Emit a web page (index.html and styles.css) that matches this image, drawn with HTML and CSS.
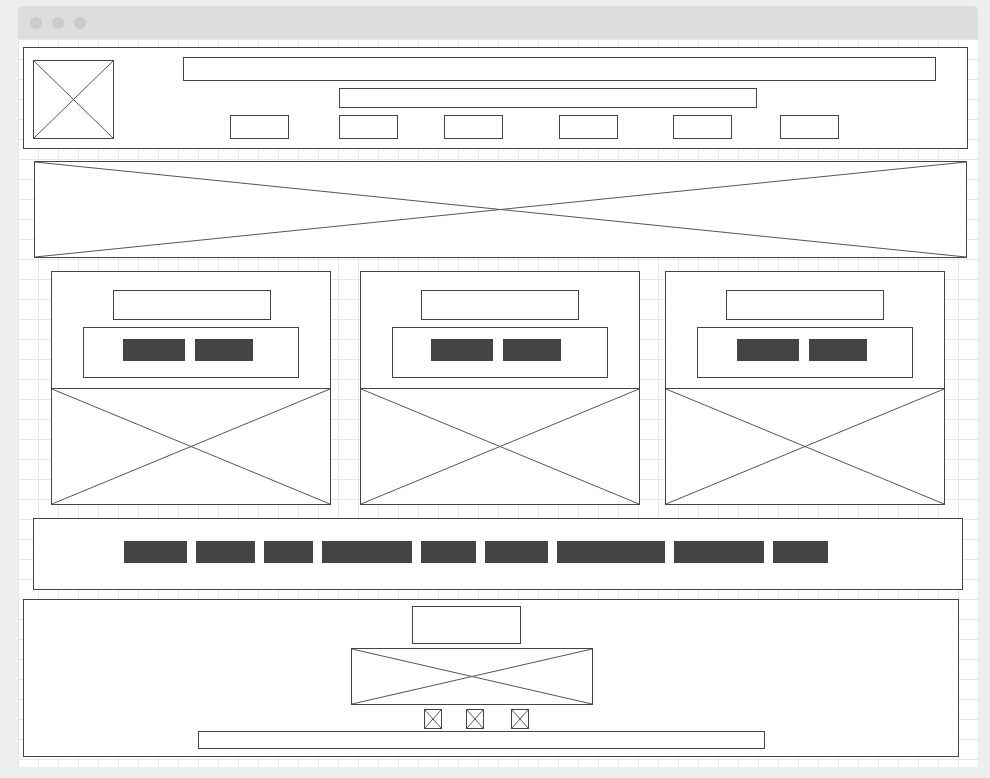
FILE: index.html
```html
<!DOCTYPE html>
<html>
<head>
<meta charset="utf-8">
<title>Wireframe</title>
<link rel="stylesheet" href="styles.css">
</head>
<body>
<div class="window">
  <div class="titlebar"><span class="dot"></span><span class="dot"></span><span class="dot"></span></div>
  <div class="content">
    <div class="header">
      <div class="logo box"><svg class="x" viewBox="0 0 100 100" preserveAspectRatio="none"><line x1="0" y1="0" x2="100" y2="100"/><line x1="100" y1="0" x2="0" y2="100"/></svg></div>
      <div class="hcol">
        <div class="box topbar"></div>
        <div class="box subbar"></div>
        <div class="hnav">
          <div class="box hbtn"></div><div class="box hbtn"></div><div class="box hbtn"></div><div class="box hbtn"></div><div class="box hbtn"></div><div class="box hbtn"></div>
        </div>
      </div>
    </div>
    <div class="box banner"><svg class="x" viewBox="0 0 100 100" preserveAspectRatio="none"><line x1="0" y1="0" x2="100" y2="100"/><line x1="100" y1="0" x2="0" y2="100"/></svg></div>
    <div class="cards">
      <div class="box card">
        <div class="box ctitle"></div>
        <div class="box cinner"><span class="fill w62"></span><span class="fill w58"></span></div>
        <div class="cimg"><svg class="x" viewBox="0 0 100 100" preserveAspectRatio="none"><line x1="0" y1="0" x2="100" y2="100"/><line x1="100" y1="0" x2="0" y2="100"/></svg></div>
      </div>
      <div class="box card">
        <div class="box ctitle"></div>
        <div class="box cinner"><span class="fill w62"></span><span class="fill w58"></span></div>
        <div class="cimg"><svg class="x" viewBox="0 0 100 100" preserveAspectRatio="none"><line x1="0" y1="0" x2="100" y2="100"/><line x1="100" y1="0" x2="0" y2="100"/></svg></div>
      </div>
      <div class="box card">
        <div class="box ctitle"></div>
        <div class="box cinner"><span class="fill w62"></span><span class="fill w58"></span></div>
        <div class="cimg"><svg class="x" viewBox="0 0 100 100" preserveAspectRatio="none"><line x1="0" y1="0" x2="100" y2="100"/><line x1="100" y1="0" x2="0" y2="100"/></svg></div>
      </div>
    </div>
    <div class="box navbar">
      <span class="fill n1"></span><span class="fill n2"></span><span class="fill n3"></span><span class="fill n4"></span><span class="fill n5"></span><span class="fill n6"></span><span class="fill n7"></span><span class="fill n8"></span><span class="fill n9"></span>
    </div>
    <div class="box footer">
      <div class="box ftitle"></div>
      <div class="box fimg"><svg class="x" viewBox="0 0 100 100" preserveAspectRatio="none"><line x1="0" y1="0" x2="100" y2="100"/><line x1="100" y1="0" x2="0" y2="100"/></svg></div>
      <div class="ficons">
        <div class="box ficon"><svg class="x" viewBox="0 0 100 100" preserveAspectRatio="none"><line x1="0" y1="0" x2="100" y2="100"/><line x1="100" y1="0" x2="0" y2="100"/></svg></div>
        <div class="box ficon"><svg class="x" viewBox="0 0 100 100" preserveAspectRatio="none"><line x1="0" y1="0" x2="100" y2="100"/><line x1="100" y1="0" x2="0" y2="100"/></svg></div>
        <div class="box ficon"><svg class="x" viewBox="0 0 100 100" preserveAspectRatio="none"><line x1="0" y1="0" x2="100" y2="100"/><line x1="100" y1="0" x2="0" y2="100"/></svg></div>
      </div>
      <div class="box fbar"></div>
    </div>
  </div>
</div>
</body>
</html>
```
FILE: styles.css
```css
* { box-sizing: border-box; }
html, body { margin: 0; padding: 0; }
body {
  background: #eeeeee;
  width: 990px;
  height: 778px;
  overflow: hidden;
  font-family: "Liberation Sans", Arial, sans-serif;
}
.window {
  margin: 6px 0 0 18px;
  width: 960px;
  height: 761px;
  background: #fff;
  border-radius: 5px 5px 0 0;
  overflow: hidden;
  display: flex;
  flex-direction: column;
}
.titlebar {
  height: 33px;
  flex: none;
  background: #dddddd;
  display: flex;
  align-items: center;
  gap: 10px;
  padding-left: 12px;
}
.dot {
  width: 12px;
  height: 12px;
  border-radius: 50%;
  background: #cbcbcb;
}
.content {
  flex: 1;
  background-color: #fff;
  background-image:
    linear-gradient(to right, #e7e7e7 1px, transparent 1px),
    linear-gradient(to bottom, #e7e7e7 1px, transparent 1px);
  background-size: 20px 20px;
  display: flex;
  flex-direction: column;
  align-items: flex-start;
}
.box {
  border: 1px solid #444;
  background: #fff;
  flex: none;
}
.x {
  display: block;
  width: 100%;
  height: 100%;
}
.x line {
  stroke: #555;
  stroke-width: 1;
  vector-effect: non-scaling-stroke;
}
.fill {
  display: block;
  background: #444;
  height: 22px;
  flex: none;
}

/* header */
.header {
  margin: 8px 0 0 5px;
  width: 945px;
  height: 102px;
  border: 1px solid #444;
  background: #fff;
  display: flex;
  align-items: flex-start;
  padding: 9px 0 0 9px;
}
.logo {
  width: 81px;
  height: 79px;
  margin-top: 3px;
}
.hcol {
  margin-left: 69px;
  display: flex;
  flex-direction: column;
  align-items: flex-start;
}
.topbar { width: 753px; height: 24px; }
.subbar { width: 418px; height: 20px; margin: 7px 0 0 156px; }
.hnav { display: flex; margin: 7px 0 0 47px; }
.hbtn { width: 59px; height: 24px; }
.hbtn:nth-child(2) { margin-left: 50px; }
.hbtn:nth-child(3) { margin-left: 46px; }
.hbtn:nth-child(4) { margin-left: 56px; }
.hbtn:nth-child(5) { margin-left: 55px; }
.hbtn:nth-child(6) { margin-left: 48px; }

/* banner */
.banner {
  margin: 12px 0 0 16px;
  width: 933px;
  height: 97px;
}

/* cards */
.cards {
  display: flex;
  margin: 13px 0 0 33px;
}
.card {
  width: 280px;
  height: 234px;
  display: flex;
  flex-direction: column;
}
.card:nth-child(2) { margin-left: 29px; }
.card:nth-child(3) { margin-left: 25px; }
.ctitle {
  width: 158px;
  height: 30px;
  margin: 18px 0 0 60px;
}
.card:first-child .ctitle { margin-left: 61px; }
.cinner {
  width: 216px;
  height: 51px;
  margin: 7px 0 0 31px;
  display: flex;
  align-items: flex-start;
  gap: 10px;
  padding: 11px 0 0 39px;
}
.card:nth-child(2) .cinner { padding-left: 38px; }
.w62 { width: 62px; }
.w58 { width: 58px; }
.cimg {
  margin-top: 10px;
  height: 116px;
  flex: none;
  border-top: 1px solid #444;
}

/* navbar */
.navbar {
  margin: 13px 0 0 15px;
  width: 930px;
  height: 72px;
  display: flex;
  align-items: flex-start;
  gap: 9px;
  padding: 22px 0 0 90px;
}
.n1 { width: 63px; }
.n2 { width: 59px; }
.n3 { width: 49px; }
.n4 { width: 90px; }
.n5 { width: 55px; }
.n6 { width: 63px; }
.n7 { width: 108px; }
.n8 { width: 90px; }
.n9 { width: 55px; }

/* footer */
.footer {
  margin: 9px 0 0 5px;
  width: 936px;
  height: 158px;
  display: flex;
  flex-direction: column;
  align-items: flex-start;
}
.ftitle {
  width: 109px;
  height: 38px;
  margin: 6px 0 0 388px;
}
.fimg {
  width: 242px;
  height: 57px;
  margin: 4px 0 0 327px;
}
.ficons {
  display: flex;
  margin: 4px 0 0 400px;
}
.ficon { width: 18px; height: 20px; }
.ficon:nth-child(2) { margin-left: 24px; }
.ficon:nth-child(3) { margin-left: 27px; }
.fbar {
  width: 567px;
  height: 18px;
  margin: 2px 0 0 174px;
}
```
